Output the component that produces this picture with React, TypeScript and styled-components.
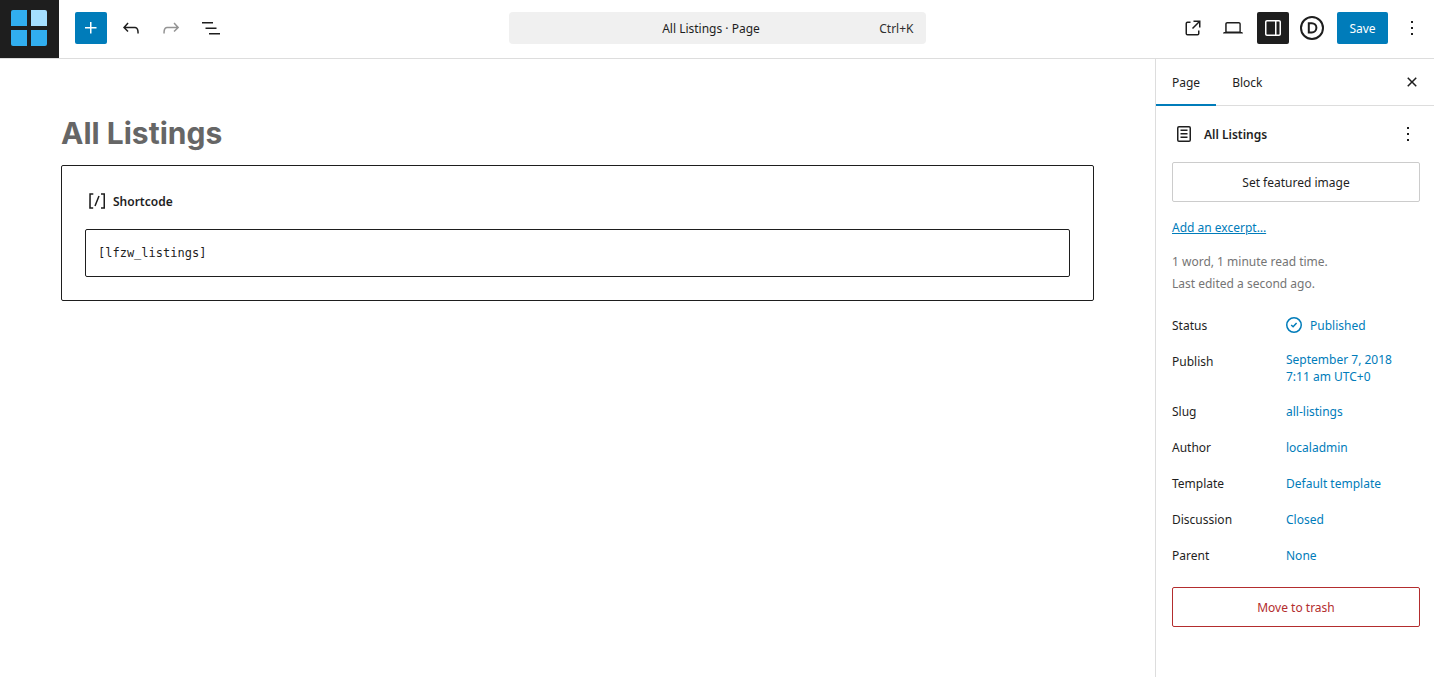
import React from "react";
import styled, { createGlobalStyle, css } from "styled-components";

const blue = "#007cba";
const ink = "#1e1e1e";
const line = "#ddd";
const sans = '"Noto Sans", "Open Sans", sans-serif';

const Global = createGlobalStyle`
  *, *::before, *::after { box-sizing: border-box; }
  body { margin: 0; background: #fff; color: ${ink}; font: 400 12px/18px ${sans}; }
  button, input { font: inherit; color: inherit; }
  button { cursor: pointer; }
  h1, h2, p, dl, dd { margin: 0; }
`;

const Shell = styled.div`
  min-height: 100vh;
  display: flex;
  flex-direction: column;
`;

const Header = styled.header`
  display: grid;
  grid-template-columns: 1fr minmax(200px, 417px) 1fr;
  align-items: start;
  height: 59px;
  border-bottom: 1px solid ${line};
`;

const HeaderStart = styled.div`
  display: flex;
  align-items: flex-start;
`;

const Tools = styled.div`
  display: flex;
  align-items: center;
  gap: 8px;
  padding: 12px 0 0 16px;
`;

const Actions = styled(Tools)`
  justify-content: flex-end;
  padding: 12px 6px 0 0;
`;

const SiteLink = styled.a`
  display: flex;
  align-items: center;
  justify-content: center;
  width: 59px;
  height: 58px;
  padding: 0 2px 2px 0;
  background: ${ink};
`;

const IconButton = styled.button<{ $tone?: "primary" | "dark"; $size?: number }>`
  display: flex;
  align-items: center;
  justify-content: center;
  flex: none;
  width: ${(p) => p.$size ?? 32}px;
  height: ${(p) => p.$size ?? 32}px;
  padding: 0;
  border: 0;
  border-radius: 2px;
  background: transparent;
  color: ${ink};
  ${(p) => p.$tone && css`
    color: #fff;
    background: ${p.$tone === "primary" ? blue : ink};
  `}
  &:disabled { color: #949494; }
`;

const SaveButton = styled.button`
  min-width: 51px;
  height: 32px;
  padding: 2px 0 0;
  border: 0;
  border-radius: 2px;
  background: ${blue};
  color: #fff;
`;

const CommandBar = styled.button`
  display: grid;
  grid-template-columns: 1fr auto 1fr;
  align-items: center;
  height: 32px;
  margin-top: 12px;
  padding: 2px 12px 0;
  border: 0;
  border-radius: 4px;
  background: #f0f0f0;
`;

const CommandTitle = styled.span`
  grid-column: 2;
  padding-right: 12px;
`;

const Shortcut = styled.span`
  justify-self: end;
  color: #2f2f2f;
`;

const Body = styled.div`
  flex: 1;
  display: flex;
`;

const Canvas = styled.main`
  flex: 1;
  min-width: 0;
  padding: 56px 61px;
`;

const Title = styled.h1`
  margin-bottom: 14px;
  color: #666;
  font: 700 30px/36px Inter, sans-serif;
`;

const BlockCard = styled.section`
  padding: 23px;
  border: 1px solid ${ink};
  border-radius: 2px;
`;

const BlockLabel = styled.label`
  display: flex;
  align-items: center;
  gap: 4px;
  height: 24px;
  margin-bottom: 16px;
  font-weight: 600;
`;

const BlockName = styled.span`
  padding-top: 2px;
`;

const ShortcodeInput = styled.input`
  display: block;
  width: 100%;
  height: 48px;
  padding: 0 12px;
  border: 1px solid ${ink};
  border-radius: 2px;
  && { font: 400 12px/20px "DejaVu Sans Mono", monospace; }
`;

const Sidebar = styled.aside`
  flex: none;
  width: 279px;
  border-left: 1px solid ${line};
`;

const Tabs = styled.div`
  display: flex;
  align-items: center;
  height: 47px;
  padding-right: 10px;
  border-bottom: 1px solid ${line};
`;

const Tab = styled.button<{ $active?: boolean }>`
  height: 47px;
  padding: 4px 16px 0;
  border: 0;
  border-bottom: 2px solid ${(p) => (p.$active ? blue : "transparent")};
  background: transparent;
`;

const Spacer = styled.span`
  flex: 1;
`;

const Panel = styled.div`
  padding: 16px 14px 16px 16px;
`;

const PanelHead = styled.div`
  display: flex;
  align-items: center;
  gap: 8px;
  margin-bottom: 16px;
`;

const PanelTitle = styled.h2`
  flex: 1;
  padding-top: 2px;
  font-size: 12px;
  font-weight: 600;
`;

const WideButton = styled.button<{ $danger?: boolean }>`
  display: block;
  width: 100%;
  height: 40px;
  padding: 2px 12px 0;
  border: 1px solid ${(p) => (p.$danger ? "#b32d2e" : "#ccc")};
  border-radius: 2px;
  background: transparent;
  color: ${(p) => (p.$danger ? "#b32d2e" : ink)};
`;

const ExcerptLink = styled.a`
  display: inline-block;
  margin: 17px 0 14px;
  color: ${blue};
`;

const Meta = styled.p`
  margin-bottom: 14px;
  color: #757575;
  line-height: 22px;
`;

const Rows = styled.dl`
  display: flex;
  flex-direction: column;
  gap: 4px;
  margin-bottom: 16px;
`;

const Row = styled.div`
  display: grid;
  grid-template-columns: 114px 1fr;
  align-items: start;
`;

const RowLabel = styled.dt`
  padding-top: 2px;
  line-height: 30px;
`;

const RowValue = styled.button`
  display: flex;
  align-items: center;
  gap: 4px;
  min-height: 32px;
  padding: 6px 0;
  border: 0;
  background: transparent;
  color: ${blue};
  line-height: 17px;
  text-align: left;
  white-space: pre-line;
`;

const StatusIcon = styled.span`
  display: flex;
  margin: -2px 0 -2px -4px;
`;

const Icon = ({ d, size = 24 }: { d: string; size?: number }) => (
  <svg width={size} height={size} viewBox="0 0 24 24" fill="currentColor" fillRule="evenodd" aria-hidden="true">
    <path d={d} />
  </svg>
);

const icons = {
  plus: "M11 12.5V17.5H12.5V12.5H17.5V11H12.5V6H11V11H6V12.5H11Z",
  undo: "M18.3 11.7c-.6-.6-1.4-.9-2.3-.9H6.7l2.9-3.3-1.1-1-4.5 5L8.5 16l1-1-2.7-2.7H16c.5 0 .9.2 1.3.5 1 1 1 3.4 1 4.5v.3h1.5v-.2c0-1.5 0-4.3-1.5-5.7z",
  redo: "M15.6 6.5l-1.1 1 2.9 3.3H8c-.9 0-1.7.3-2.3.9-1.4 1.5-1.4 4.2-1.4 5.6v.2h1.5v-.3c0-1.1 0-3.5 1-4.5.3-.3.7-.5 1.3-.5h9.2L14.5 15l1.1 1.1 4.6-4.6-4.6-5z",
  list: "M3 6h11v1.5H3V6Zm3.5 5.5h11V13h-11v-1.5ZM21 17H10v1.5h11V17Z",
  external:
    "M19.5 4.5h-7V6h4.44l-5.97 5.97 1.06 1.06L18 7.06v4.44h1.5v-7Zm-13 1a2 2 0 0 0-2 2v10a2 2 0 0 0 2 2h10a2 2 0 0 0 2-2v-3H17v3a.5.5 0 0 1-.5.5h-10a.5.5 0 0 1-.5-.5v-10a.5.5 0 0 1 .5-.5h3V5.5h-3Z",
  desktop:
    "M20.5 16h-.7V8c0-1.1-.9-2-2-2H6.2c-1.1 0-2 .9-2 2v8h-.7c-.8 0-1.5.7-1.5 1.5h20c0-.8-.7-1.5-1.5-1.5zM5.7 8c0-.3.2-.5.5-.5h11.7c.3 0 .5.2.5.5v7.6H5.7V8z",
  drawer:
    "M18 4H6c-1.1 0-2 .9-2 2v12c0 1.1.9 2 2 2h12c1.1 0 2-.9 2-2V6c0-1.1-.9-2-2-2zm-4 14.5H6c-.3 0-.5-.2-.5-.5V6c0-.3.2-.5.5-.5h8v13zm4.5-.5c0 .3-.2.5-.5.5h-2.5v-13H18c.3 0 .5.2.5.5v12z",
  more: "M13 19h-2v-2h2v2zm0-6h-2v-2h2v2zm0-6h-2V5h2v2z",
  close:
    "M12 13.06l3.712 3.713 1.061-1.06L13.061 12l3.712-3.712-1.06-1.06L12 10.938 8.288 7.227l-1.061 1.06L10.939 12l-3.712 3.712 1.06 1.061L12 13.061z",
  shortcode:
    "M16 4.2v1.5h2.5v12.5H16v1.5h4V4.2h-4zM4.2 19.8h4v-1.5H5.8V5.8h2.5V4.2h-4l-.1 15.6zm5.1-3.1l1.4.6 4-10-1.4-.6-4 10z",
  page: "M15.5 7.5h-7V9h7V7.5Zm-7 3.5h7v1.5h-7V11Zm7 3.5h-7V16h7v-1.5ZM17 4H7a2 2 0 0 0-2 2v12a2 2 0 0 0 2 2h10a2 2 0 0 0 2-2V6a2 2 0 0 0-2-2ZM7 5.5h10a.5.5 0 0 1 .5.5v12a.5.5 0 0 1-.5.5H7a.5.5 0 0 1-.5-.5V6a.5.5 0 0 1 .5-.5Z",
};

const SiteLogo = () => (
  <svg width="36" height="36" viewBox="0 0 36 36" aria-hidden="true">
    <path d="M2 0h14v16H0V2a2 2 0 0 1 2-2Z" fill="#31aeef" />
    <path d="M20 0h14a2 2 0 0 1 2 2v14H20Z" fill="#a5dfff" />
    <path d="M0 20h16v16H2a2 2 0 0 1-2-2Z" fill="#31aeef" />
    <path d="M20 20h16v14a2 2 0 0 1-2 2H20Z" fill="#31aeef" />
  </svg>
);

const DiviIcon = () => (
  <svg width="26" height="26" viewBox="0 0 26 26" fill="none" stroke="currentColor" aria-hidden="true">
    <circle cx="12" cy="13" r="11" strokeWidth="2" />
    <path d="M8.800 8.200h3a4.600 4.600 0 0 1 0 9.200h-3Z" strokeWidth="2" />
  </svg>
);

const PublishedIcon = () => (
  <svg width="24" height="24" viewBox="0 0 24 24" fill="none" stroke="currentColor" strokeWidth="1.500" aria-hidden="true">
    <circle cx="12" cy="12" r="7.250" />
    <path d="M9.200 12l1.900 1.800 3.500-3.700" />
  </svg>
);

const details = [
  { label: "Status", value: "Published", icon: true },
  { label: "Publish", value: "September 7, 2018\n7:11 am UTC+0" },
  { label: "Slug", value: "all-listings" },
  { label: "Author", value: "localadmin" },
  { label: "Template", value: "Default template" },
  { label: "Discussion", value: "Closed" },
  { label: "Parent", value: "None" },
];

export default function App() {
  return (
    <Shell>
      <Global />
      <Header>
        <HeaderStart>
          <SiteLink href="#" aria-label="View pages"><SiteLogo /></SiteLink>
          <Tools>
            <IconButton $tone="primary" aria-label="Add block"><Icon d={icons.plus} /></IconButton>
            <IconButton aria-label="Undo"><Icon d={icons.undo} /></IconButton>
            <IconButton aria-label="Redo" disabled><Icon d={icons.redo} /></IconButton>
            <IconButton aria-label="Document overview"><Icon d={icons.list} /></IconButton>
          </Tools>
        </HeaderStart>
        <CommandBar>
          <CommandTitle>All Listings · Page</CommandTitle>
          <Shortcut>Ctrl+K</Shortcut>
        </CommandBar>
        <Actions>
          <IconButton aria-label="View page"><Icon d={icons.external} /></IconButton>
          <IconButton aria-label="Preview"><Icon d={icons.desktop} /></IconButton>
          <IconButton $tone="dark" aria-label="Settings"><Icon d={icons.drawer} /></IconButton>
          <IconButton aria-label="Divi settings"><DiviIcon /></IconButton>
          <SaveButton>Save</SaveButton>
          <IconButton aria-label="Options"><Icon d={icons.more} /></IconButton>
        </Actions>
      </Header>
      <Body>
        <Canvas>
          <Title>All Listings</Title>
          <BlockCard>
            <BlockLabel htmlFor="shortcode">
              <Icon d={icons.shortcode} />
              <BlockName>Shortcode</BlockName>
            </BlockLabel>
            <ShortcodeInput id="shortcode" defaultValue="[lfzw_listings]" />
          </BlockCard>
        </Canvas>
        <Sidebar>
          <Tabs role="tablist">
            <Tab role="tab" aria-selected="true" $active>Page</Tab>
            <Tab role="tab" aria-selected="false">Block</Tab>
            <Spacer />
            <IconButton $size={24} aria-label="Close settings"><Icon d={icons.close} /></IconButton>
          </Tabs>
          <Panel>
            <PanelHead>
              <Icon d={icons.page} />
              <PanelTitle>All Listings</PanelTitle>
              <IconButton $size={24} aria-label="Actions"><Icon d={icons.more} /></IconButton>
            </PanelHead>
            <WideButton>Set featured image</WideButton>
            <ExcerptLink href="#">Add an excerpt…</ExcerptLink>
            <Meta>1 word, 1 minute read time.<br />Last edited a second ago.</Meta>
            <Rows>
              {details.map((item) => (
                <Row key={item.label}>
                  <RowLabel>{item.label}</RowLabel>
                  <dd>
                    <RowValue>
                      {item.icon && <StatusIcon><PublishedIcon /></StatusIcon>}
                      {item.value}
                    </RowValue>
                  </dd>
                </Row>
              ))}
            </Rows>
            <WideButton $danger>Move to trash</WideButton>
          </Panel>
        </Sidebar>
      </Body>
    </Shell>
  );
}
